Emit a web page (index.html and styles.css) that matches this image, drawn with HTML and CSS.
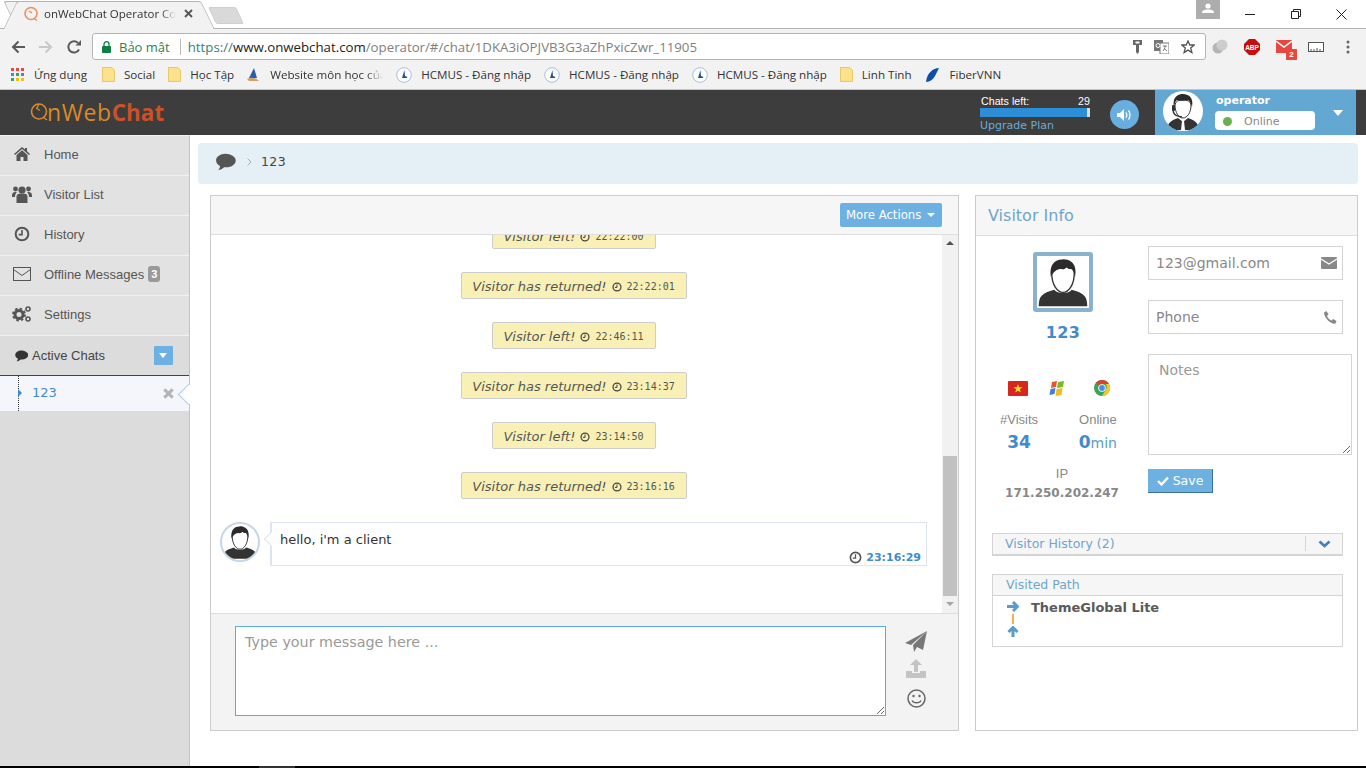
FILE: index.html
```html
<!DOCTYPE html>
<html lang="vi">

<head>
    <meta charset="UTF-8" />
    <meta name="viewport" content="width=device-width, initial-scale=1.0" />
    <title>onWebChat Operator Console</title>
    <link rel="stylesheet" href="styles.css">
</head>

<body>
    <svg class="defs" width="0" height="0">
        <symbol id="i-visitor" viewBox="0 0 60 60">
            <path d="M2 58c0-12 4-15 18-19 3 5 17 5 20 0 14 4 18 7 18 19z" fill="#333" />
            <path d="M17 20c0 14 7 22 13 22s13-8 13-22C43 9 17 9 17 20z" fill="#fff" stroke="#333" stroke-width="1.6" />
            <path d="M16 24c-2-12 3-20 13-20 6-1 14 3 15 10 1 4 0 7 0 10-1-4-2-8-4-10-2 2-4 1-6-1-1 2-4 3-6 2-5 0-9 3-12 9z" fill="#2b2b2b" />
        </symbol>
        <symbol id="i-clock" viewBox="0 0 24 24">
            <circle cx="12" cy="12" r="9.5" fill="none" stroke="currentColor" stroke-width="3" />
            <path d="M12 6v7H7" fill="none" stroke="currentColor" stroke-width="2.4" />
        </symbol>
        <symbol id="i-comment" viewBox="0 0 24 22">
            <path d="M12 1C5.6 1 .5 4.6.5 9.2c0 2.9 2 5.4 5 6.9-.3 1.8-1.2 3.4-2.3 4.7 2.6-.3 5.3-1.5 7.1-3.5.9.1 1.8.2 2.7.2 6.4 0 11.5-3.7 11.5-8.3S18.4 1 12 1z" fill="currentColor" />
        </symbol>
        <symbol id="i-folder" viewBox="0 0 14 16">
            <path d="M.5.5h10l3 3v12H.5z" fill="#fde28e" stroke="#e6c35c" />
        </symbol>
        <symbol id="i-hcmus" viewBox="0 0 16 16">
            <circle cx="8" cy="8" r="7.3" fill="#fff" stroke="#a9bdd8" />
            <path d="M8.5 3 6 11h5.5L10 9l-1 .5z" fill="#1f4f96" />
        </symbol>
    </svg>

    <div class="tabstrip">
        <div class="tab">
            <svg class="tab-icon" width="16" height="16" viewBox="0 0 16 16">
                <circle cx="8" cy="7.5" r="6" fill="none" stroke="#e8925a" stroke-width="1.6" />
                <path d="M11 12.5l3 2M6 5l3 2" fill="none" stroke="#e8925a" stroke-width="1.4" />
            </svg>
            <span class="tab-title">onWebChat Operator Console</span>
            <svg class="tab-close" width="9" height="9" viewBox="0 0 9 9">
                <path d="M1 1l7 7M8 1L1 8" stroke="#555" stroke-width="1.8" />
            </svg>
        </div>
        <div class="new-tab"></div>
        <div class="win-user">
            <svg width="12" height="10" viewBox="0 0 12 10">
                <circle cx="6" cy="3" r="2.6" fill="#fff" />
                <path d="M0 10c0-3 3-3.5 6-3.5s6 .5 6 3.5z" fill="#fff" />
            </svg>
        </div>
        <div class="win-controls">
            <svg width="10" height="10" viewBox="0 0 10 10"><path d="M0 5.5h10" stroke="#222" /></svg>
            <svg width="10" height="10" viewBox="0 0 10 10"><path d="M.5 2.5h7v7h-7zM2.5 2.5v-2h7v7h-2" fill="none" stroke="#222" /></svg>
            <svg width="11" height="11" viewBox="0 0 11 11"><path d="M.5.5l10 10M10.5.5l-10 10" stroke="#222" /></svg>
        </div>
    </div>

    <div class="toolbar">
        <svg class="nav-btn" width="14" height="14" viewBox="0 0 14 14"><path d="M14 7H2M7.5 1.5L2 7l5.5 5.5" fill="none" stroke="#5a5a5a" stroke-width="2" /></svg>
        <svg class="nav-btn" width="14" height="14" viewBox="0 0 14 14"><path d="M0 7h12M6.5 1.5L12 7l-5.5 5.5" fill="none" stroke="#c8c8c8" stroke-width="2" /></svg>
        <svg class="nav-btn" width="14" height="14" viewBox="0 0 14 14"><path d="M12 9.5A5.6 5.6 0 1 1 11 3" fill="none" stroke="#5a5a5a" stroke-width="2" /><path d="M8.5 5.5H14V0z" fill="#5a5a5a" /></svg>
        <div class="omnibox">
            <svg class="lock" width="9" height="12" viewBox="0 0 9 12"><path d="M2 5V3.2a2.5 2.5 0 0 1 5 0V5" fill="none" stroke="#0b8043" stroke-width="1.3" /><rect y="5" width="9" height="7" rx=".8" fill="#0b8043" /></svg>
            <span class="secure">Bảo mật</span>
            <span class="omni-sep"></span>
            <span class="url"><span class="url-scheme">https://</span><span class="url-host">www.onwebchat.com</span>/operator/#/chat/1DKA3iOPJVB3G3aZhPxicZwr_11905</span>
            <svg class="omni-icon" width="9" height="14" viewBox="0 0 9 14"><path d="M0 0h9v5H6v7l-1.5 2L3 12V5H0zM2.5 1.5v2h4v-2z" fill="#666" fill-rule="evenodd" /></svg>
            <svg class="omni-icon" width="15" height="14" viewBox="0 0 15 14"><rect width="9" height="11" fill="#777" /><rect x="6" y="3" width="9" height="11" fill="#fff" stroke="#777" /><path d="M9 6h4M11 6c0 2-1 4-2 5M10 8l3 3" stroke="#777" fill="none" /><circle cx="4" cy="5.5" r="2" fill="none" stroke="#fff" /></svg>
            <svg class="omni-icon" width="14" height="14" viewBox="0 0 14 14"><path d="M7 1l1.8 4h4.4L9.7 8l1.2 4.5L7 10.1l-3.900 2.400L4.300 8 .8 5h4.400z" fill="none" stroke="#555" stroke-width="1.3" /></svg>
        </div>
        <div class="ext-icons">
            <svg width="16" height="16" viewBox="0 0 16 16"><circle cx="6" cy="9" r="5.5" fill="#b5b5b5" /><circle cx="10" cy="6" r="5.5" fill="#cdcdcd" /></svg>
            <svg width="16" height="16" viewBox="0 0 16 16"><path d="M5 0h6l5 5v6l-5 5H5l-5-5V5z" fill="#c70d0d" /><text x="8" y="10.5" class="abp-text">ABP</text></svg>
            <span class="gmail-icon">
                <svg width="16" height="13" viewBox="0 0 16 13"><rect width="16" height="13" fill="#e8483f" /><path d="M0 1l8 6 8-6" fill="none" stroke="#fff" stroke-width="1.4" /></svg>
                <span class="gmail-badge">2</span>
            </span>
            <svg width="16" height="10" viewBox="0 0 16 10"><rect x=".5" y=".5" width="15" height="9" fill="#fff" stroke="#555" /><path d="M3 9V7M6 9V7M9 9V6M12 9V7" stroke="#555" /></svg>
            <svg class="menu-dots" width="4" height="14" viewBox="0 0 4 14"><circle cx="2" cy="2" r="1.5" fill="#666" /><circle cx="2" cy="7" r="1.5" fill="#666" /><circle cx="2" cy="12" r="1.5" fill="#666" /></svg>
        </div>
    </div>

    <div class="bookmarks">
        <span class="bm bm-apps">
            <svg width="13" height="13" viewBox="0 0 13 13">
                <rect width="3" height="3" fill="#e8483f" /><rect x="5" width="3" height="3" fill="#e8483f" /><rect x="10" width="3" height="3" fill="#e8483f" />
                <rect y="5" width="3" height="3" fill="#4285f4" /><rect x="5" y="5" width="3" height="3" fill="#34a853" /><rect x="10" y="5" width="3" height="3" fill="#4285f4" />
                <rect y="10" width="3" height="3" fill="#34a853" /><rect x="5" y="10" width="3" height="3" fill="#fbbc05" /><rect x="10" y="10" width="3" height="3" fill="#fbbc05" />
            </svg>
            Ứng dụng
        </span>
        <span class="bm"><svg width="13" height="15"><use href="#i-folder" /></svg>Social</span>
        <span class="bm bm-tight"><svg width="13" height="15"><use href="#i-folder" /></svg>Học Tập</span>
        <span class="bm">
            <svg width="16" height="16" viewBox="0 0 16 16"><path d="M9 1L4 11h8z" fill="#2a5ea8" /><path d="M2 12c3-2 8-2 12 2H4z" fill="#c9a36a" /></svg>
            <span class="bm-fade">Website môn học của tôi</span>
        </span>
        <span class="bm"><svg width="16" height="16"><use href="#i-hcmus" /></svg>HCMUS - Đăng nhập</span>
        <span class="bm"><svg width="16" height="16"><use href="#i-hcmus" /></svg>HCMUS - Đăng nhập</span>
        <span class="bm"><svg width="16" height="16"><use href="#i-hcmus" /></svg>HCMUS - Đăng nhập</span>
        <span class="bm"><svg width="13" height="15"><use href="#i-folder" /></svg>Linh Tinh</span>
        <span class="bm">
            <svg width="16" height="16" viewBox="0 0 16 16"><path d="M14 1C8 1 2 6 1 15c4 0 8-3 10-8 1-2 2-4 3-6z" fill="#0d4ea6" /></svg>
            FiberVNN
        </span>
    </div>

    <header class="app-header">
        <div class="logo">
            <svg width="18" height="20" viewBox="0 0 18 20">
                <circle cx="9" cy="9.5" r="7.5" fill="none" stroke="#d98a2a" stroke-width="1.6" />
                <path d="M13 15l4 3M6 6l4 2.5M9 2L7 6" fill="none" stroke="#d98a2a" stroke-width="1.3" />
            </svg>
            <span class="logo-on">nWeb</span><span class="logo-chat">Chat</span>
        </div>
        <div class="chats-left">
            <div class="chats-row"><span>Chats left:</span><span>29</span></div>
            <div class="chats-bar"><div class="chats-fill"></div></div>
            <div class="upgrade">Upgrade Plan</div>
        </div>
        <div class="sound-btn">
            <svg width="15" height="12" viewBox="0 0 15 12">
                <path d="M0 4h3l4-4v12L3 8H0z" fill="#fff" />
                <path d="M9 3.5c1 1.5 1 3.5 0 5M11.5 1.5c2 2.5 2 6.5 0 9" fill="none" stroke="#fff" stroke-width="1.3" />
            </svg>
        </div>
        <div class="operator">
            <div class="op-avatar">
                <svg width="38" height="38" viewBox="0 0 38 38">
                    <path d="M3 38c0-8 6-10 11-12l5 4 5-4c5 2 11 4 11 12z" fill="#333" />
                    <path d="M18 29h2l1 9h-4z" fill="#fff" />
                    <path d="M11 13c0 8 4 13 8 13s8-5 8-13C27 6 11 6 11 13z" fill="#fff" stroke="#333" />
                    <path d="M10 15C8 4 15 2 19 2c5 0 11 3 9 13-1-3-2-6-4-7-3 1-9 1-11 0-2 1-2 4-3 7z" fill="#2b2b2b" />
                    <path d="M9 17c0 5 2 7 9 8" fill="none" stroke="#333" stroke-width="1.4" />
                    <rect x="8" y="13" width="3" height="6" rx="1" fill="#333" />
                </svg>
            </div>
            <div class="op-info">
                <div class="op-name">operator</div>
                <div class="op-status"><span class="status-dot"></span>Online</div>
            </div>
            <span class="op-caret"></span>
        </div>
    </header>

    <div class="app-body">
        <nav class="sidebar">
            <a class="nav-item">
                <svg class="nav-icon" width="16" height="14" viewBox="0 0 16 14"><path d="M8 0l3 2.5V1h2v3.2L16 7l-1 1-7-6-7 6-1-1z" fill="#555" /><path d="M2.5 8L8 3.3 13.5 8v6h-4v-4h-3v4h-4z" fill="#555" /></svg>
                Home
            </a>
            <a class="nav-item">
                <svg class="nav-icon" width="20" height="18" viewBox="0 0 20 18"><circle cx="10" cy="5" r="3.6" fill="#555" /><circle cx="3.5" cy="4" r="2.4" fill="#555" /><circle cx="16.5" cy="4" r="2.4" fill="#555" /><path d="M4.5 18V12c0-3 2-3.5 5.5-3.5s5.5.5 5.5 3.5v6z" fill="#555" /><path d="M0 11c0-3 1-4 3.5-4L5 7.5C3.5 8.5 3 10 3 12H0zM20 11c0-3-1-4-3.5-4l-1.5.5c1.5 1 2 2.5 2 4.500h3z" fill="#555" /></svg>
                Visitor List
            </a>
            <a class="nav-item">
                <svg class="nav-icon nav-clock" width="16" height="16"><use href="#i-clock" /></svg>
                History
            </a>
            <a class="nav-item">
                <svg class="nav-icon" width="18" height="14" viewBox="0 0 18 14"><rect x=".5" y=".5" width="17" height="13" fill="none" stroke="#555" /><path d="M.5 2.5L9 8.5l8.5-6" fill="none" stroke="#555" /></svg>
                Offline Messages <span class="nav-badge">3</span>
            </a>
            <a class="nav-item">
                <svg class="nav-icon" width="20" height="18" viewBox="0 0 20 18">
                    <circle cx="7" cy="9.5" r="4" fill="none" stroke="#555" stroke-width="3" />
                    <circle cx="7" cy="9.5" r="6" fill="none" stroke="#555" stroke-width="1.8" stroke-dasharray="2.5 2.2" />
                    <circle cx="16" cy="4" r="2" fill="none" stroke="#555" stroke-width="1.6" />
                    <circle cx="16" cy="14" r="2" fill="none" stroke="#555" stroke-width="1.6" />
                </svg>
                Settings
            </a>
            <div class="nav-active-head">
                <svg class="head-icon" width="13" height="12"><use href="#i-comment" /></svg>
                <span class="head-text">Active Chats</span>
                <span class="head-toggle"></span>
            </div>
            <div class="active-chat">
                <span class="chat-tree"></span>
                <span class="chat-name">123</span>
                <svg class="chat-close" width="11" height="11" viewBox="0 0 10 10"><path d="M1.2 1.2l7.6 7.6M8.8 1.2L1.2 8.8" stroke="#b5b5b5" stroke-width="2.8" /></svg>
            </div>
        </nav>

        <main class="content">
            <div class="crumb">
                <svg class="crumb-icon" width="21" height="18"><use href="#i-comment" /></svg>
                <svg class="crumb-sep" width="5" height="8" viewBox="0 0 5 8"><path d="M.5.5L4 4 .5 7.5" fill="none" stroke="#aaa" /></svg>
                <span>123</span>
            </div>

            <div class="panels">
                <section class="chat-panel">
                    <div class="chat-head">
                        <button class="more-btn">More Actions <span class="more-caret"></span></button>
                    </div>
                    <div class="chat-scroll">
                        <div class="messages">
                            <div class="sys-msg"><em>Visitor left!</em><svg width="10" height="10"><use href="#i-clock" /></svg><code>22:22:00</code></div>
                            <div class="sys-msg"><em>Visitor has returned!</em><svg width="10" height="10"><use href="#i-clock" /></svg><code>22:22:01</code></div>
                            <div class="sys-msg"><em>Visitor left!</em><svg width="10" height="10"><use href="#i-clock" /></svg><code>22:46:11</code></div>
                            <div class="sys-msg"><em>Visitor has returned!</em><svg width="10" height="10"><use href="#i-clock" /></svg><code>23:14:37</code></div>
                            <div class="sys-msg"><em>Visitor left!</em><svg width="10" height="10"><use href="#i-clock" /></svg><code>23:14:50</code></div>
                            <div class="sys-msg"><em>Visitor has returned!</em><svg width="10" height="10"><use href="#i-clock" /></svg><code>23:16:16</code></div>
                            <div class="client-msg">
                                <div class="client-avatar"><svg width="36" height="36"><use href="#i-visitor" /></svg></div>
                                <div class="bubble">
                                    <div>hello, i'm a client</div>
                                    <div class="bubble-time"><svg width="13" height="13"><use href="#i-clock" /></svg><strong>23:16:29</strong></div>
                                </div>
                            </div>
                        </div>
                        <div class="scrollbar">
                            <span class="arrow-up"></span>
                            <span class="thumb"></span>
                            <span class="arrow-down"></span>
                        </div>
                    </div>
                    <div class="chat-foot">
                        <textarea class="msg-input" placeholder="Type your message here ..."></textarea>
                        <div class="foot-icons">
                            <svg width="22" height="22" viewBox="0 0 22 22"><path d="M22 0L18 19l-6-3-3 5-1-7zM22 0L0 12l6 2z" fill="#777" /></svg>
                            <svg width="20" height="19" viewBox="0 0 20 19"><path d="M10 0l6 6h-4v7H8V6H4z" fill="#c4c4c4" /><path d="M0 12h6v2h8v-2h6v7H0z" fill="#c4c4c4" /></svg>
                            <svg class="smile" width="19" height="19" viewBox="0 0 19 19"><circle cx="9.5" cy="9.5" r="8.5" fill="none" stroke="#666" stroke-width="1.5" /><circle cx="6.5" cy="7" r="1.2" fill="#666" /><circle cx="12.5" cy="7" r="1.2" fill="#666" /><path d="M5 11.5c1.5 3 7.5 3 9 0" fill="none" stroke="#666" stroke-width="1.4" /></svg>
                        </div>
                    </div>
                </section>

                <aside class="visitor-panel">
                    <h2 class="visitor-head">Visitor Info</h2>
                    <div class="visitor-body">
                        <div class="visitor-left">
                            <div class="visitor-photo"><svg width="52" height="52"><use href="#i-visitor" /></svg></div>
                            <div class="visitor-name">123</div>
                            <div class="visitor-flags">
                                <svg width="20" height="15" viewBox="0 0 20 15"><rect width="20" height="15" rx="1" fill="#d8261c" /><path d="M10 3l1.1 3.2h3.4l-2.7 2 1 3.3L10 9.5l-2.8 2 1-3.300-2.700-2h3.400z" fill="#ffe326" /></svg>
                                <svg class="win-logo" width="16" height="15" viewBox="0 0 16 15"><path d="M3 1l5-1-1 6-5 1z" fill="#e8552a" /><path d="M9 1l6-1-1 6-6 1z" fill="#7ab82c" /><path d="M1.5 8l5-1-1 6-5 1z" fill="#3f7fd6" /><path d="M7.5 8l6-1-1 7-6 1z" fill="#f4bb20" /></svg>
                                <svg width="16" height="16" viewBox="0 0 16 16"><circle cx="8" cy="8" r="8" fill="#3ba551" /><path d="M8 0a8 8 0 0 1 7 4H8a4 4 0 0 0-3.5 2L2 2.5A8 8 0 0 1 8 0z" fill="#e0402f" /><path d="M15 4a8 8 0 0 1-7 12l3.5-6a4 4 0 0 0 0-6z" fill="#f8c52b" /><circle cx="8" cy="8" r="3.8" fill="#fff" /><circle cx="8" cy="8" r="2.9" fill="#4a8bf0" /></svg>
                            </div>
                            <div class="visitor-stats">
                                <div>
                                    <div class="stat-label">#Visits</div>
                                    <div class="stat-value">34</div>
                                </div>
                                <div>
                                    <div class="stat-label">Online</div>
                                    <div class="stat-value">0<span class="stat-unit">min</span></div>
                                </div>
                            </div>
                            <div class="visitor-ip">
                                <div class="stat-label">IP</div>
                                <div class="ip-value">171.250.202.247</div>
                            </div>
                        </div>
                        <div class="visitor-form">
                            <div class="field">
                                <span class="field-value">123@gmail.com</span>
                                <svg width="16" height="12" viewBox="0 0 16 12"><rect width="16" height="12" rx="1" fill="#888" /><path d="M0 2l8 5 8-5" fill="none" stroke="#fff" stroke-width="1.2" /></svg>
                            </div>
                            <div class="field">
                                <span class="field-value">Phone</span>
                                <svg width="13" height="13" viewBox="0 0 13 13"><path d="M0 1.5L2.5 0l2 3.5L3 5c.8 2 2.5 3.8 4.5 4.5L9 8l3.5 2-1 2.5C11 13 9 13 6 11 3 9 0 5 0 1.5z" fill="#888" /></svg>
                            </div>
                            <textarea class="notes" placeholder="Notes"></textarea>
                            <button class="save-btn">
                                <svg width="12" height="10" viewBox="0 0 12 10"><path d="M1 5l3.500 3.500L11 1.500" fill="none" stroke="#fff" stroke-width="2.4" /></svg>
                                Save
                            </button>
                        </div>
                    </div>
                    <div class="history-bar">
                        <span>Visitor History (2)</span>
                        <span class="history-toggle">
                            <svg width="13" height="8" viewBox="0 0 13 8"><path d="M1.5 1.5l5 4.5 5-4.5" fill="none" stroke="#3f7fc0" stroke-width="2.6" /></svg>
                        </span>
                    </div>
                    <div class="path-box">
                        <div class="path-head">Visited Path</div>
                        <div class="path-body">
                            <div class="path-icons">
                                <svg width="12" height="11" viewBox="0 0 12 11"><path d="M0 5.5h9M6 1l4.5 4.5L6 10" fill="none" stroke="#5a9cc9" stroke-width="3" /></svg>
                                <span class="path-line"></span>
                                <svg width="12" height="11" viewBox="0 0 12 11"><path d="M6 11V2M1.5 6L6 1.5 10.5 6" fill="none" stroke="#5a9cc9" stroke-width="3" /></svg>
                            </div>
                            <strong>ThemeGlobal Lite</strong>
                        </div>
                    </div>
                </aside>
            </div>
        </main>
    </div>

    <div class="screen-edge"><span></span></div>
</body>

</html>
```

FILE: styles.css
```css
:root {
    --azul: #6cb1e1;
    --azul-escuro: #428bca;
    --cinza-borda: #cccccc;
    --texto: #555555;
    --titulo: #6fa5cc;
}

* {
    box-sizing: border-box;
}

html,
body {
    height: 768px;
}

body {
    margin: 0;
    overflow: hidden;
    display: flex;
    flex-direction: column;
    background: #fff;
    color: var(--texto);
    font-family: 'DejaVu Sans', sans-serif;
    font-size: 13px;
}

.defs {
    position: absolute;
}

/* browser window */
.tabstrip {
    height: 29px;
    flex: none;
    display: flex;
    align-items: flex-start;
    border-bottom: 1px solid #b4b4b4;
    padding-left: 15px;
}

.tab {
    position: relative;
    width: 188px;
    height: 29px;
    display: flex;
    align-items: center;
    padding: 0 0 2px 8px;
    font-family: 'Open Sans', sans-serif;
    font-size: 11.5px;
    color: #333;
    z-index: 1;
}

.tab::before {
    content: '';
    position: absolute;
    top: 1px;
    bottom: 0;
    left: -5px;
    right: -5px;
    background: #f2f2f2;
    border: 1px solid #b4b4b4;
    border-bottom: none;
    border-radius: 3px 3px 0 0;
    transform: skewX(26deg);
    z-index: -1;
}

.tab::after {
    content: '';
    position: absolute;
    top: 1px;
    bottom: 0;
    left: -5px;
    width: 60%;
    background: #f2f2f2;
    border: 1px solid #b4b4b4;
    border-right: none;
    border-bottom: none;
    border-radius: 3px 0 0 0;
    transform: skewX(-26deg);
    z-index: -1;
}

.tab-icon {
    flex: none;
    margin-right: 5px;
}

.tab-title {
    width: 132px;
    white-space: nowrap;
    overflow: hidden;
    -webkit-mask-image: linear-gradient(to right, #000 88%, transparent);
    mask-image: linear-gradient(to right, #000 88%, transparent);
}

.tab-close {
    margin-left: 8px;
    flex: none;
}

.new-tab {
    width: 28px;
    height: 17px;
    margin: 7px 0 0 9px;
    background: #d9d9d9;
    border: 1px solid #cfcfcf;
    border-radius: 2px;
    transform: skewX(25deg);
}

.win-user {
    width: 24px;
    height: 19px;
    margin-left: auto;
    background: #adadad;
    display: flex;
    align-items: center;
    justify-content: center;
    padding-bottom: 3px;
}

.win-controls {
    width: 146px;
    padding: 9px 19px 0 25px;
    display: flex;
    justify-content: space-between;
    align-items: flex-start;
}

.toolbar {
    height: 35px;
    flex: none;
    background: #f2f2f2;
    display: flex;
    align-items: center;
    padding: 0 0 0 11px;
}

.nav-btn {
    margin-right: 14px;
    flex: none;
}

.omnibox {
    width: 1114px;
    height: 27px;
    margin-left: -3px;
    background: #fff;
    border: 1px solid #b4b4b4;
    border-radius: 3px;
    display: flex;
    align-items: center;
    padding: 0 10px 0 9px;
    font-family: 'Open Sans', sans-serif;
    font-size: 13px;
}

.lock {
    flex: none;
    margin-right: 8px;
}

.secure {
    color: #2f7f52;
}

.omni-sep {
    width: 1px;
    height: 16px;
    background: #bbb;
    margin: 0 7px 0 10px;
}

.url {
    color: #808080;
    flex: 1;
    white-space: nowrap;
    font-size: 13.25px;
}

.url-scheme {
    color: #3c8078;
}

.url-host {
    color: #222;
}

.omni-icon {
    flex: none;
    margin-left: 12px;
}

.ext-icons {
    display: flex;
    align-items: center;
    gap: 16px;
    margin-left: 6px;
}

.menu-dots {
    margin-left: 6px;
}

.abp-text {
    font-family: 'Liberation Sans', sans-serif;
    font-size: 6.5px;
    font-weight: bold;
    fill: #fff;
    text-anchor: middle;
}

.gmail-icon {
    position: relative;
    display: flex;
}

.gmail-badge {
    position: absolute;
    right: -5px;
    bottom: -7px;
    width: 11px;
    height: 11px;
    background: #e8483f;
    color: #fff;
    font: bold 8px 'Liberation Sans', sans-serif;
    text-align: center;
    line-height: 11px;
}

.bookmarks {
    height: 26px;
    flex: none;
    background: #f2f2f2;
    border-bottom: 1px solid #c4c4c4;
    display: flex;
    align-items: center;
    gap: 13px;
    padding: 0 0 4px 11px;
    font-family: 'Open Sans', sans-serif;
    font-size: 11.6px;
    color: #333;
    white-space: nowrap;
}

.bm {
    display: flex;
    align-items: center;
    gap: 9px;
}

.bm-apps {
    gap: 10px;
    margin-right: 2px;
}

.bm-tight {
    margin-right: -2px;
}

.bm-fade {
    width: 113px;
    overflow: hidden;
    -webkit-mask-image: linear-gradient(to right, #000 85%, transparent);
    mask-image: linear-gradient(to right, #000 85%, transparent);
}

/* header do app */
.app-header {
    height: 45px;
    flex: none;
    background: #3d3d3d;
    display: flex;
    align-items: stretch;
    padding: 0 10px 0 30px;
    position: relative;
}

.logo {
    display: flex;
    align-items: center;
    font-family: 'Open Sans', sans-serif;
    font-size: 23px;
    letter-spacing: .6px;
    width: 950px;
    padding-bottom: 1px;
}

.logo svg {
    margin-right: -1px;
}

.logo-on {
    color: #d98a2a;
}

.logo-chat {
    color: #cb5128;
    font-weight: bold;
    font-size: 22.5px;
    letter-spacing: 0;
}

.chats-left {
    width: 110px;
    margin-top: 5px;
    font-size: 10px;
    color: #fff;
}

.chats-row {
    display: flex;
    justify-content: space-between;
    font-family: 'Liberation Sans', sans-serif;
    font-size: 10.7px;
    line-height: 12px;
    padding: 0 0 0 1px;
}

.chats-bar {
    height: 9px;
    background: #ddd;
    margin-top: 1px;
}

.chats-fill {
    width: 107px;
    height: 9px;
    background: #2b8ed6;
}

.upgrade {
    color: #66add9;
    font-size: 11px;
    margin-top: 2px;
    white-space: nowrap;
}

.sound-btn {
    width: 29px;
    height: 29px;
    margin: 10px 16px 0 20px;
    border-radius: 50%;
    background: #68afdf;
    display: flex;
    align-items: center;
    justify-content: center;
}

.operator {
    width: 201px;
    background: #63a8d2;
    display: flex;
    padding: 1px 0 0 8px;
    position: relative;
}

.op-avatar {
    width: 40px;
    height: 40px;
    border-radius: 50%;
    background: #fff;
    display: flex;
    align-items: center;
    justify-content: center;
    overflow: hidden;
}

.op-info {
    margin-left: 12px;
    width: 100px;
}

.op-name {
    color: #fff;
    font-size: 11px;
    font-weight: bold;
    margin-top: 3px;
    line-height: 13px;
    padding-left: 1px;
}

.op-status {
    height: 19px;
    margin-top: 4px;
    background: #fff;
    border-radius: 4px;
    display: flex;
    align-items: center;
    padding: 1px 0 0 8px;
    font-size: 11px;
    color: #888;
}

.status-dot {
    width: 9px;
    height: 9px;
    border-radius: 50%;
    background: #6ab04c;
    margin-right: 12px;
}

.op-caret {
    width: 0;
    height: 0;
    margin: 19px 0 0 18px;
    border-left: 5px solid transparent;
    border-right: 5px solid transparent;
    border-top: 6px solid #fff;
}

.app-body {
    flex: 1;
    display: flex;
    min-height: 0;
}

.screen-edge {
    height: 2px;
    flex: none;
    background: #000;
    padding-left: 259px;
}

.screen-edge span {
    display: block;
    width: 36px;
    height: 2px;
    background: #333;
}

/* sidebar */
.sidebar {
    width: 190px;
    flex: none;
    background: #dcdcdc;
    border-top: 1px solid #f2f2f2;
    border-right: 1px solid #a8cbe0;
    font-family: 'Liberation Sans', sans-serif;
    font-size: 13px;
}

.nav-item {
    height: 40px;
    display: flex;
    align-items: center;
    background: #e2e2e2;
    border-bottom: 1px solid #f2f2f2;
    padding: 0 0 3px 12px;
    position: relative;
    white-space: nowrap;
}

.nav-icon {
    width: 20px;
    margin-right: 12px;
    flex: none;
}

.nav-clock {
    color: #555;
}

.nav-badge {
    margin-left: 4px;
    width: 12px;
    height: 16px;
    border-radius: 3px;
    background: #999;
    color: #fff;
    font-size: 11px;
    font-weight: bold;
    text-align: center;
    line-height: 16px;
}

.nav-active-head {
    height: 40px;
    background: #dcdcdc;
    border-bottom: 1px solid #444;
    display: flex;
    align-items: center;
    padding-left: 15px;
    color: #444;
}

.head-icon {
    color: #333;
    margin-right: 4px;
}

.head-text {
    flex: 1;
}

.head-toggle {
    width: 19px;
    height: 19px;
    margin-right: 16px;
    background: var(--azul);
    border-radius: 1px;
    position: relative;
}

.head-toggle::after {
    content: '';
    position: absolute;
    left: 5px;
    top: 7px;
    border-left: 4px solid transparent;
    border-right: 4px solid transparent;
    border-top: 5px solid #fff;
}

.active-chat {
    height: 35px;
    background: #f4f6fb;
    display: flex;
    align-items: center;
    position: relative;
    font-family: 'DejaVu Sans', sans-serif;
    font-size: 13px;
    color: var(--azul-escuro);
    padding-left: 32px;
}

.chat-tree {
    position: absolute;
    left: 18px;
    top: 0;
    bottom: 0;
    border-left: 1px dotted #333;
}

.chat-tree::after {
    content: '';
    position: absolute;
    left: -1px;
    top: 13px;
    border-top: 4px solid transparent;
    border-bottom: 4px solid transparent;
    border-left: 4px solid var(--azul-escuro);
}

.chat-name {
    flex: 1;
    padding-bottom: 2px;
}

.chat-close {
    margin-right: 15px;
}

.active-chat::after {
    content: '';
    position: absolute;
    right: -7px;
    top: 11px;
    width: 14px;
    height: 14px;
    background: #fff;
    border-left: 1px solid #a8cbe0;
    border-bottom: 1px solid #a8cbe0;
    transform: rotate(45deg);
}

/* conteudo */
.content {
    flex: 1;
    padding: 8px 8px 0;
    min-width: 0;
}

.crumb {
    height: 41px;
    background: #e4eff6;
    border-radius: 4px;
    display: flex;
    align-items: center;
    padding: 0 0 4px 17px;
    color: #444;
    font-size: 12.5px;
    letter-spacing: .4px;
}

.crumb-icon {
    color: #555;
}

.crumb-sep {
    margin: 0 9px 0 11px;
}

.panels {
    display: flex;
    gap: 16px;
    margin: 11px 0 0 12px;
    height: 536px;
}

.chat-panel {
    width: 749px;
    border: 1px solid var(--cinza-borda);
    display: flex;
    flex-direction: column;
}

.chat-head {
    height: 39px;
    flex: none;
    background: #f6f6f6;
    border-bottom: 1px solid #ddd;
    display: flex;
    justify-content: flex-end;
    align-items: flex-start;
    padding: 7px 16px 0 0;
}

.more-btn {
    width: 102px;
    height: 24px;
    border: none;
    border-radius: 2px;
    background: var(--azul);
    color: #fff;
    font-family: 'DejaVu Sans', sans-serif;
    font-size: 11.7px;
    padding: 0 1px 1px 0;
    white-space: nowrap;
}

.more-caret {
    display: inline-block;
    margin-left: 2px;
    vertical-align: middle;
    border-left: 4px solid transparent;
    border-right: 4px solid transparent;
    border-top: 4px solid #fff;
}

.chat-scroll {
    flex: 1;
    display: flex;
    min-height: 0;
    overflow: hidden;
}

.messages {
    flex: 1;
    min-width: 0;
    padding: 0 14px 0 9px;
    margin-top: -13px;
    display: flex;
    flex-direction: column;
    align-items: center;
}

.sys-msg {
    height: 27px;
    margin-bottom: 23px;
    background: #f9f0b5;
    border: 1px solid var(--cinza-borda);
    border-radius: 2px;
    display: flex;
    align-items: center;
    padding: 1px 11px 0 10px;
    color: #555;
    font-size: 13px;
    flex: none;
}

.sys-msg svg {
    margin: 1px 5px 0 5px;
    color: #444;
}

.sys-msg code {
    font-family: 'DejaVu Sans Mono', monospace;
    font-size: 10px;
}

.client-msg {
    align-self: stretch;
    display: flex;
    align-items: flex-start;
    margin-right: 1px;
}

.client-avatar {
    width: 40px;
    height: 40px;
    border: 2px solid #c8d6e6;
    border-radius: 50%;
    overflow: hidden;
    display: flex;
    align-items: flex-end;
    justify-content: center;
    flex: none;
}

.bubble {
    flex: 1;
    height: 44px;
    margin-left: 10px;
    border: 1px solid #dde4ef;
    border-left-width: 2px;
    padding: 9px 5px 0 8px;
    position: relative;
    color: #333;
}

.bubble::before {
    content: '';
    position: absolute;
    left: -6px;
    top: 11px;
    width: 9px;
    height: 9px;
    background: #fff;
    border-left: 1px solid #dde4ef;
    border-bottom: 1px solid #dde4ef;
    transform: rotate(45deg);
}

.bubble-time {
    display: flex;
    justify-content: flex-end;
    align-items: center;
    gap: 4px;
    margin-top: 4px;
    color: #555;
    font-size: 11px;
    line-height: 13px;
}

.bubble-time strong {
    color: var(--azul-escuro);
}

.scrollbar {
    width: 16px;
    flex: none;
    background: #f1f1f1;
    display: flex;
    flex-direction: column;
    align-items: center;
    padding-top: 6px;
}

.arrow-up {
    border-left: 4px solid transparent;
    border-right: 4px solid transparent;
    border-bottom: 4px solid #505050;
}

.thumb {
    width: 14px;
    height: 140px;
    background: #c1c1c1;
    margin-top: 211px;
}

.arrow-down {
    margin-top: 6px;
    border-left: 4px solid transparent;
    border-right: 4px solid transparent;
    border-top: 4px solid #a3a3a3;
}

.chat-foot {
    height: 117px;
    flex: none;
    background: #f3f3f3;
    border-top: 1px solid #ddd;
    display: flex;
    padding: 12px 0 0 24px;
}

.msg-input {
    width: 651px;
    height: 90px;
    border: 1px solid #5fa9df;
    padding: 7px 9px;
    font-family: 'DejaVu Sans', sans-serif;
    font-size: 14.3px;
    color: #333;
    margin: 0;
    outline: none;
}

.msg-input::placeholder,
.notes::placeholder {
    color: #999;
    opacity: 1;
}

.foot-icons {
    width: 60px;
    display: flex;
    flex-direction: column;
    align-items: center;
    gap: 6px;
    padding-top: 5px;
}

.smile {
    margin-top: 5px;
}

/* visitor info */
.visitor-panel {
    width: 383px;
    border: 1px solid var(--cinza-borda);
}

.visitor-head {
    margin: 0;
    height: 40px;
    background: #f6f6f6;
    border-bottom: 1px solid #ddd;
    padding: 0 0 0 12px;
    font-weight: normal;
    font-size: 16px;
    line-height: 40px;
    color: var(--titulo);
}

.visitor-body {
    display: flex;
    height: 297px;
}

.visitor-left {
    width: 174px;
    flex: none;
    padding-top: 16px;
    text-align: center;
}

.visitor-photo {
    width: 60px;
    height: 60px;
    margin: 0 auto;
    border: 4px solid #8ab1cd;
    border-radius: 3px;
    display: flex;
    align-items: flex-end;
    justify-content: center;
    overflow: hidden;
}

.visitor-name {
    font-size: 16px;
    font-weight: bold;
    color: var(--azul-escuro);
    margin-top: 11px;
    line-height: 20px;
    letter-spacing: .3px;
}

.visitor-flags {
    display: flex;
    align-items: center;
    justify-content: space-between;
    margin: 37px 40px 0 32px;
    height: 16px;
}

.win-logo {
    margin-right: 8px;
}

.visitor-stats {
    display: flex;
    justify-content: space-between;
    padding: 0 33px 0 24px;
    margin-top: 16px;
}

.stat-label {
    font-family: 'Liberation Sans', sans-serif;
    font-size: 13px;
    color: #888;
    line-height: 15px;
}

.stat-value {
    font-size: 17px;
    font-weight: bold;
    color: var(--azul-escuro);
    line-height: 22px;
    margin-top: 4px;
}

.stat-unit {
    font-weight: normal;
    font-size: 14px;
    color: #5a9cc9;
}

.visitor-ip {
    margin-top: 12px;
    padding-right: 2px;
}

.ip-value {
    font-size: 12px;
    font-weight: bold;
    color: #888;
    line-height: 20px;
    margin-top: 2px;
}

.visitor-form {
    flex: 1;
    padding-top: 10px;
    margin-left: -2px;
}

.field {
    width: 195px;
    height: 34px;
    border: 1px solid #d4d4d4;
    display: flex;
    align-items: center;
    justify-content: space-between;
    padding: 0 5px 0 7px;
    margin-bottom: 20px;
    color: #888;
    font-size: 14px;
}

.notes {
    display: block;
    width: 204px;
    height: 101px;
    border: 1px solid #d4d4d4;
    padding: 7px 10px;
    margin: 0;
    font-family: 'DejaVu Sans', sans-serif;
    font-size: 14px;
    outline: none;
}

.save-btn {
    width: 65px;
    height: 24px;
    margin-top: 14px;
    border: none;
    border-bottom: 1px solid #3f6f92;
    border-right: 1px solid #3f6f92;
    background: var(--azul);
    color: #fff;
    font-family: 'DejaVu Sans', sans-serif;
    font-size: 12.5px;
    padding: 0;
    display: flex;
    align-items: center;
    justify-content: center;
    gap: 4px;
}

.history-bar {
    width: 351px;
    height: 23px;
    margin: 0 0 18px 16px;
    background: #f6f6f6;
    border: 1px solid #d4d4d4;
    border-bottom-width: 2px;
    display: flex;
    align-items: center;
    justify-content: space-between;
    padding: 0 0 1px 12px;
    font-size: 12.5px;
    color: var(--titulo);
}

.history-toggle {
    width: 37px;
    height: 15px;
    border-left: 1px solid #d4d4d4;
    display: flex;
    align-items: center;
    justify-content: center;
}

.path-box {
    width: 351px;
    height: 73px;
    margin-left: 16px;
    border: 1px solid #d4d4d4;
}

.path-head {
    height: 21px;
    background: #f6f6f6;
    border-bottom: 1px solid #d4d4d4;
    padding-left: 13px;
    font-size: 12.5px;
    line-height: 20px;
    color: var(--titulo);
}

.path-body {
    display: flex;
    padding: 5px 0 0 14px;
    color: #5a5a5a;
}

.path-icons {
    width: 12px;
    display: flex;
    flex-direction: column;
    align-items: center;
    gap: 2px;
    margin-right: 12px;
}

.path-line {
    width: 2px;
    height: 10px;
    background: #f7b14b;
}

.path-body strong {
    font-size: 13px;
    line-height: 13px;
}
```
